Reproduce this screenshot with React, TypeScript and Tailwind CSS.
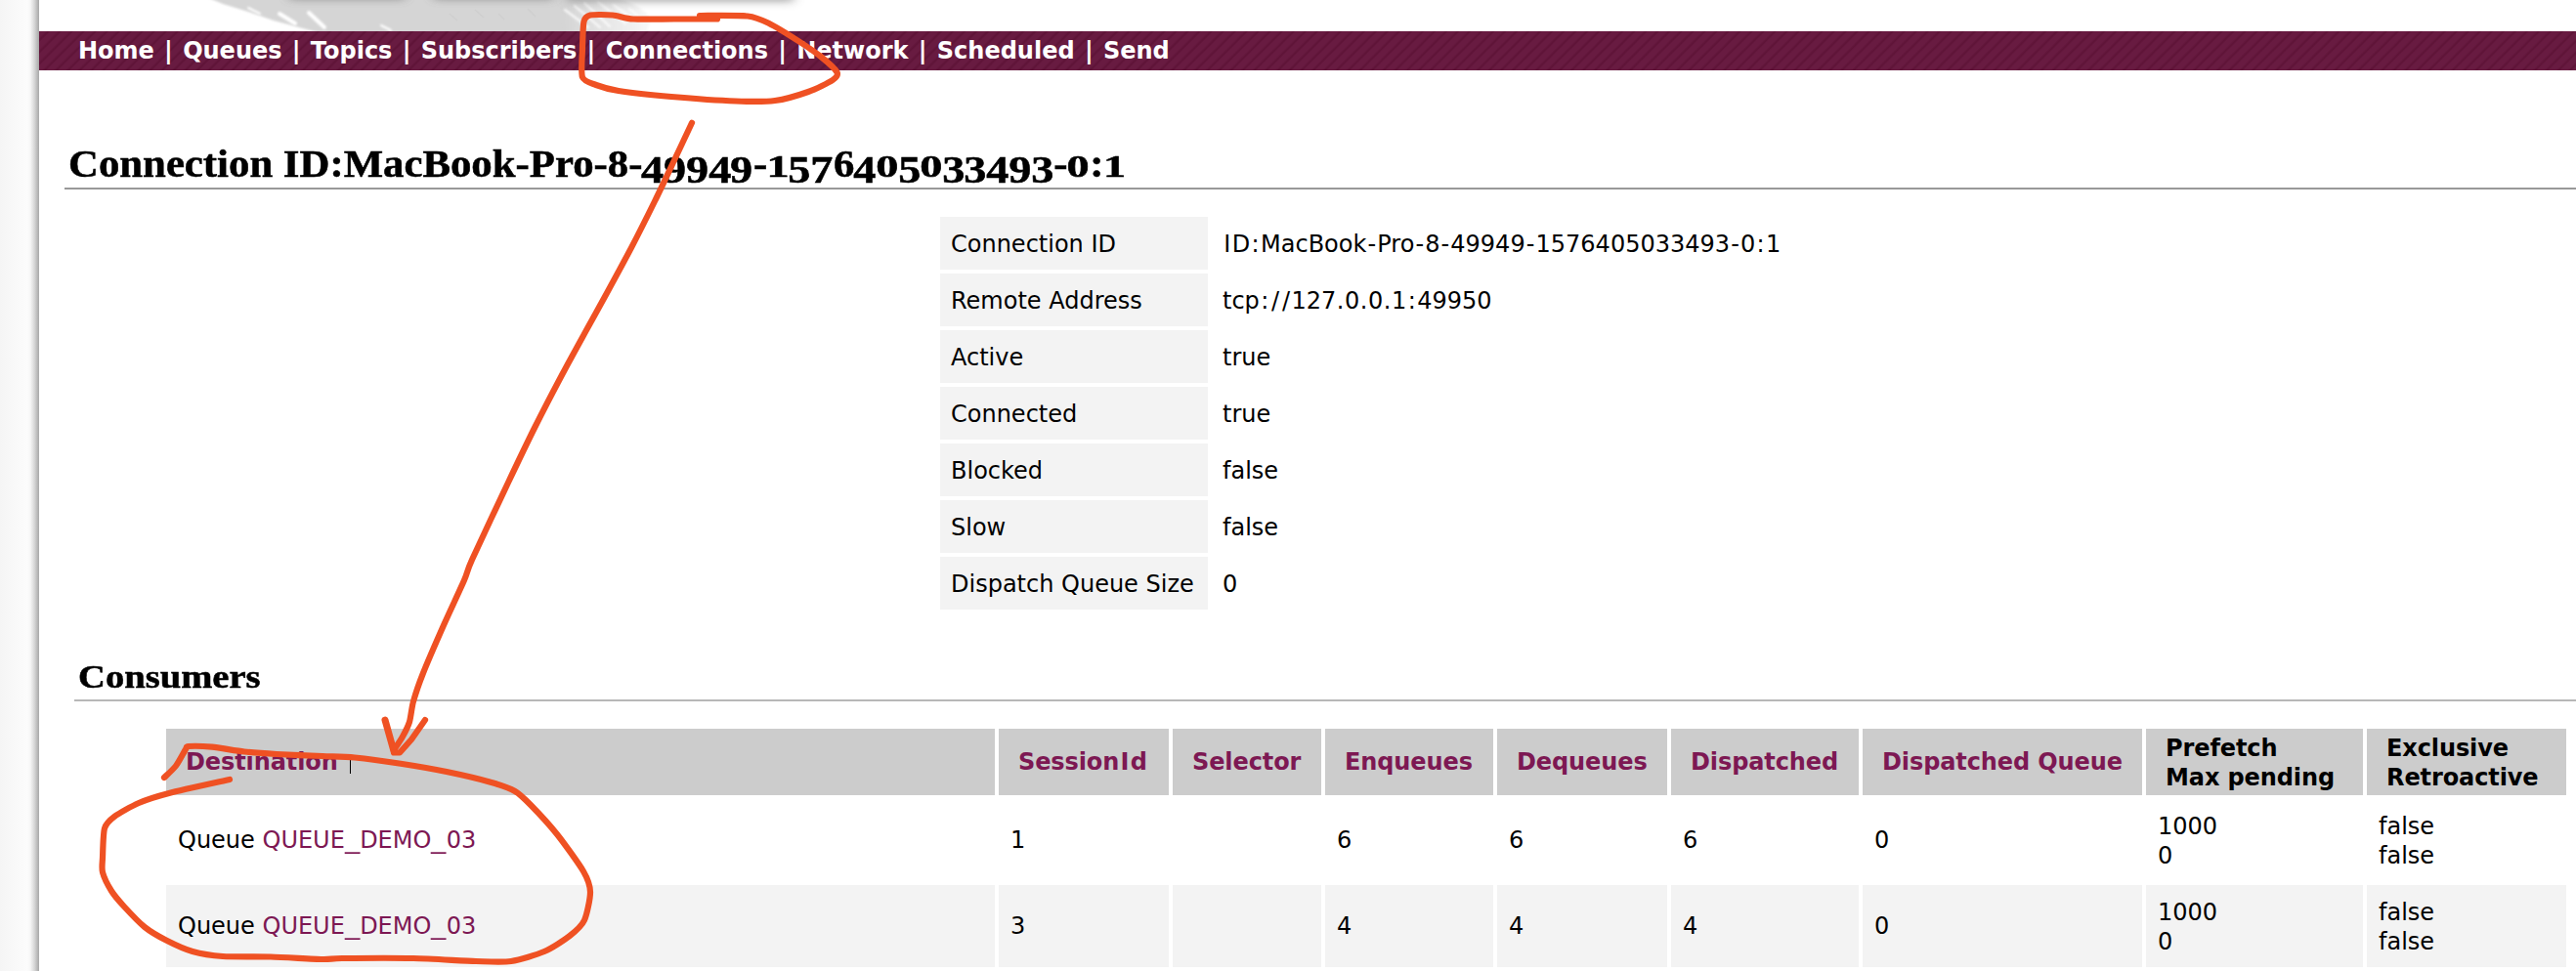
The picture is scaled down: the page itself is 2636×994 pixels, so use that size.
import React from "react";

type Point = [number, number];

const navItems = ["Home", "Queues", "Topics", "Subscribers", "Connections", "Network", "Scheduled", "Send"];

const details: [string, string][] = [
  ["Connection ID", "ID:MacBook-Pro-8-49949-1576405033493-0:1"],
  ["Remote Address", "tcp://127.0.0.1:49950"],
  ["Active", "true"],
  ["Connected", "true"],
  ["Blocked", "false"],
  ["Slow", "false"],
  ["Dispatch Queue Size", "0"],
];

const linkHeaders = ["SessionId", "Selector", "Enqueues", "Dequeues", "Dispatched", "Dispatched Queue"];

const consumers = [
  { queue: "QUEUE_DEMO_03", session: "1", count: "6" },
  { queue: "QUEUE_DEMO_03", session: "3", count: "4" },
];

const navLoop: Point[] = [
  [734, 19.5], [690, 19.5], [648, 19.5], [627, 15.5], [604, 15.5], [597.5, 22], [596, 50], [596, 79], [610, 87], [633, 93],
  [687, 99], [753, 103.5], [793, 103], [827, 94], [852, 82], [856.5, 74], [840, 58], [817, 42], [787, 24], [765, 16.5], [716, 16],
];

const arrowShaft: Point[] = [
  [708, 125.7], [690, 164], [670, 206], [646, 253.6], [621, 300], [600, 338], [576, 382], [547, 438],
  [520, 494], [483, 573], [475, 594], [454, 640], [433, 689], [423, 718], [419, 739], [412, 754], [403, 768],
];

const tableLoop: Point[] = [
  [168, 796], [180, 784], [190, 767], [193, 764], [217, 764.7], [250, 769.5], [283, 772], [330, 774], [363, 775.5], [410, 781.7],
  [457, 790], [502, 800.7], [527, 810], [543, 824], [570, 854], [597, 892], [604, 913], [598, 942], [583, 958], [557, 974],
  [523, 984], [487, 984], [423, 981], [350, 981], [330, 982], [277, 979.5], [228, 979], [197, 974], [170, 962.5], [148, 949],
  [127, 928], [114, 912], [105, 893], [105, 878], [107, 848], [117, 836], [142, 822], [173, 812], [235, 798],
];

function smooth(points: Point[]): string {
  let d = `M${points[0][0]} ${points[0][1]}`;
  for (let i = 0; i < points.length - 1; i++) {
    const p0 = points[Math.max(i - 1, 0)];
    const p1 = points[i];
    const p2 = points[i + 1];
    const p3 = points[Math.min(i + 2, points.length - 1)];
    const k = 8;
    d += `C${p1[0] + (p2[0] - p0[0]) / k} ${p1[1] + (p2[1] - p0[1]) / k} ${p2[0] - (p3[0] - p1[0]) / k} ${p2[1] - (p3[1] - p1[1]) / k} ${p2[0]} ${p2[1]}`;
  }
  return d;
}

const roomy: Record<string, string> = {
  "-": "mx-[1.1px]",
  ":": "mx-[1.4px]",
  "/": "mx-[1.4px]",
  ".": "mx-[0.55px]",
  _: "inline-block origin-left scale-x-[1.27] mr-[3.3px]",
  I: "mx-[1.3px]",
};

function Spaced({ text }: { text: string }) {
  return (
    <span>
      {text.split(/([-:/._I])/).map((part, i) =>
        roomy[part] ? (
          <span key={i} className={roomy[part]}>
            {part}
          </span>
        ) : (
          part
        ),
      )}
    </span>
  );
}

// Old-style figures: 0-2 sit at x-height, 3, 4, 5, 7 and 9 hang below the baseline.
function OldStyle({ text }: { text: string }) {
  return (
    <>
      {text.split(/(\d)/).map((part, i) => {
        if (/^[012]$/.test(part)) {
          return (
            <span key={i} className="mr-[1.2px] inline-block w-[0.62em] text-center text-[0.8em] leading-[0]">
              <span className="inline-block scale-x-[1.35]">{part}</span>
            </span>
          );
        }
        if (/^[34579]$/.test(part)) {
          return (
            <span key={i} className="mr-[1.2px] inline-block scale-x-[1.08] align-[-0.16em] leading-[0]">
              {part}
            </span>
          );
        }
        return <React.Fragment key={i}>{part}</React.Fragment>;
      })}
    </>
  );
}

function Feather() {
  return (
    <svg className="block h-8 w-full" viewBox="0 0 2596 32" preserveAspectRatio="xMinYMin slice" aria-hidden="true">
      <defs>
        <filter id="soft" filterUnits="userSpaceOnUse" x="100" y="-20" width="800" height="80">
          <feGaussianBlur stdDeviation="1.3" />
        </filter>
        <filter id="shade" filterUnits="userSpaceOnUse" x="100" y="-60" width="900" height="120">
          <feGaussianBlur stdDeviation="6 5" />
        </filter>
        <linearGradient id="tail" x1="535" x2="625" y1="0" y2="0" gradientUnits="userSpaceOnUse">
          <stop offset="0" stopColor="#d4d4d4" />
          <stop offset="1" stopColor="#f8f8f8" />
        </linearGradient>
      </defs>
      <path d="M164 -6 L540 -6 L572 36 L296 36 L266 28 L240 21 L214 12 L188 4Z" fill="#d5d5d5" filter="url(#soft)" />
      <path d="M530 -6 L575 -6 Q622 4 626 22 L620 36 L540 36Z" fill="url(#tail)" filter="url(#soft)" />
      <g stroke="#fff" fill="none" strokeLinecap="round" filter="url(#soft)">
        <path d="M246 14l16 10M276 13l16 15" strokeWidth="4" />
        <path d="M350 26l10 5M214 8l12 6" strokeWidth="2" />
        <path d="M538 10l24 18M548 6l26 22M558 3l26 24M572 2l28 22M588 5l22 16M604 9l12 10" strokeWidth="2.2" opacity="0.8" />
      </g>
      <g stroke="#c9c9c9" fill="none" strokeWidth="1.2" opacity="0.5">
        <path d="M420 14l8 7M446 10l9 8M470 14l6 6M500 9l8 8" />
      </g>
      <path d="M256 -20H374V-2H256ZM404 -20H526V-2H404Z" fill="#606060" opacity="0.75" filter="url(#shade)" />
      <path d="M540 -20H772V1H540Z" fill="#808080" opacity="0.75" filter="url(#shade)" />
    </svg>
  );
}

function Annotations() {
  return (
    <svg
      className="pointer-events-none absolute inset-0 h-[994px] w-[2636px]"
      viewBox="0 0 2636 994"
      fill="none"
      stroke="#ef5123"
      strokeWidth="6.2"
      strokeLinecap="round"
      strokeLinejoin="round"
      aria-hidden="true"
    >
      <path d={smooth(navLoop)} />
      <path d={smooth(arrowShaft)} />
      <path d="M394 737L403 769" strokeWidth="7" />
      <path d="M403 770.5L409 770.5L421 757L435 737" />
      <path d={smooth(tableLoop)} />
    </svg>
  );
}

export default function App() {
  return (
    <div className="relative flex h-[994px] w-[2636px] overflow-hidden bg-white font-['Verdana','DejaVu_Sans',sans-serif] text-[24px] leading-[30px] text-black">
      <div className="h-full w-10 shrink-0 bg-[linear-gradient(to_right,#f5f5f5_0px,#fcfcfc_28px,#f6f6f6_31px,#d8d8d8_35px,#a8a8a8_40px)]" />

      <div className="flex min-w-0 flex-1 flex-col">
        <Feather />

        <nav className="flex h-10 shrink-0 items-center bg-[#65193e] bg-[repeating-linear-gradient(135deg,#681b41_0px,#681b41_4.5px,#5f1438_6.5px,#5f1438_7px,#681b41_8.5px)] pl-10 font-bold whitespace-pre text-white">
          {navItems.map((item, i) => (
            <React.Fragment key={item}>
              {i > 0 && <span className="px-[1.9px]"> | </span>}
              <a>{item}</a>
            </React.Fragment>
          ))}
        </nav>

        <main className="flex flex-col">
          <h1 className="mt-[70px] ml-[26px] flex h-[52px] items-center border-b-2 border-[#999] pl-1 font-['Georgia','Liberation_Serif',serif] text-[39px] leading-[44px] font-bold whitespace-nowrap">
            <span className="origin-left scale-x-[1.097] pt-0.5 [-webkit-text-stroke:0.5px_#000]">
              <OldStyle text="Connection ID:MacBook-Pro-8-49949-1576405033493-0:1" />
            </span>
          </h1>

          <dl className="mt-7 ml-[922px] grid grid-cols-[274px_1fr] gap-y-1">
            {details.map(([label, value]) => (
              <React.Fragment key={label}>
                <dt className="flex h-[54px] items-center bg-[#f3f3f3] pt-0.5 pl-[11px] whitespace-nowrap">{label}</dt>
                <dd className="flex h-[54px] items-center pt-0.5 pl-[15px] whitespace-nowrap">
                  <Spaced text={value} />
                </dd>
              </React.Fragment>
            ))}
          </dl>

          <h2 className="mt-[46px] ml-9 flex h-12 items-center border-b-2 border-[#b8b8b8] pl-1 font-['Georgia','Liberation_Serif',serif] text-[33px] leading-10 font-bold">
            <span className="origin-left scale-x-[1.17] [-webkit-text-stroke:0.5px_#000]">Consumers</span>
          </h2>

          <div className="mt-7 ml-[130px] grid grid-cols-[848px_174px_152px_172px_174px_192px_286px_222px_204px] grid-rows-[68px_84px_84px] gap-1 whitespace-nowrap">
            <div className="flex items-center bg-[#ccc] pl-5 font-bold tracking-[-0.1px] text-[#7d1853]">
              Destination
              <span className="mt-1 ml-3 h-5 w-px bg-black" />
            </div>
            {linkHeaders.map((h) => (
              <div key={h} className="flex items-center bg-[#ccc] pl-5 font-bold tracking-[-0.1px] text-[#7d1853]">
                <Spaced text={h} />
              </div>
            ))}
            <div className="flex flex-col justify-center bg-[#ccc] pt-0.5 pl-5 font-bold tracking-[-0.1px]">
              <span>Prefetch</span>
              <span>Max pending</span>
            </div>
            <div className="flex flex-col justify-center bg-[#ccc] pt-0.5 pl-5 font-bold tracking-[-0.1px]">
              <span>Exclusive</span>
              <span>Retroactive</span>
            </div>

            {consumers.map((c) => (
              <div key={c.session} className="group contents">
                <div className="flex items-center pl-3 whitespace-pre group-last:bg-[#f3f3f3]">
                  Queue{" "}
                  <a className="text-[#7d1853]">
                    <Spaced text={c.queue} />
                  </a>
                </div>
                {[c.session, "", c.count, c.count, c.count, "0"].map((v, i) => (
                  <div key={i} className="flex items-center pl-3 group-last:bg-[#f3f3f3]">
                    {v}
                  </div>
                ))}
                <div className="flex flex-col justify-center pt-0.5 pl-3 group-last:bg-[#f3f3f3]">
                  <span>1000</span>
                  <span>0</span>
                </div>
                <div className="flex flex-col justify-center pt-0.5 pl-3 group-last:bg-[#f3f3f3]">
                  <span>false</span>
                  <span>false</span>
                </div>
              </div>
            ))}
          </div>
        </main>
      </div>

      <Annotations />
    </div>
  );
}
